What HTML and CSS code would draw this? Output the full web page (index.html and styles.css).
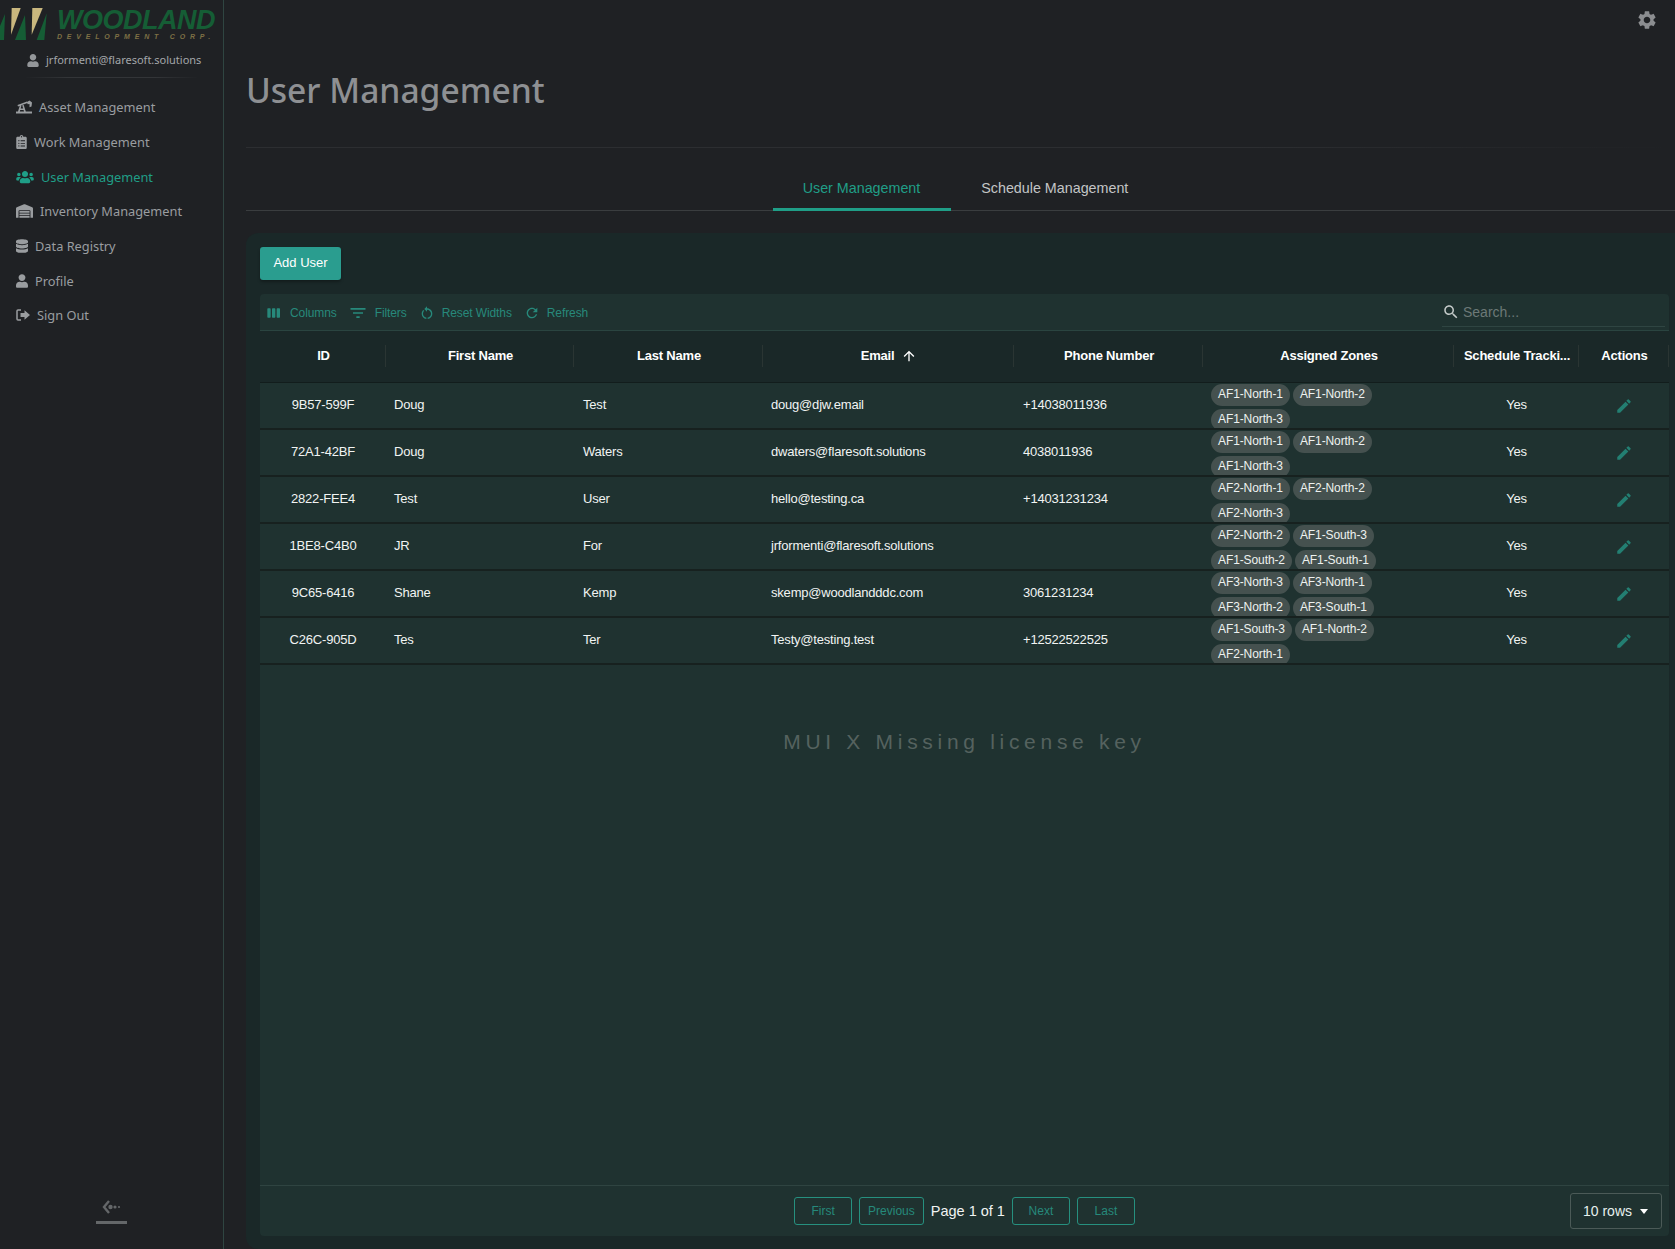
FILE: index.html
```html
<!DOCTYPE html>
<html lang="en">
<head>
<meta charset="utf-8">
<title>User Management</title>
<link rel="stylesheet" href="styles.css">
</head>
<body>
<svg class="sprite" aria-hidden="true">
  <symbol id="i-user" viewBox="0 0 448 512"><path d="M224 256c70.7 0 128-57.3 128-128S294.7 0 224 0 96 57.3 96 128s57.3 128 128 128zm89.6 32h-16.7c-22.2 10.2-46.9 16-72.9 16s-50.6-5.8-72.9-16h-16.7C60.2 288 0 348.2 0 422.4V464c0 26.5 21.5 48 48 48h352c26.5 0 48-21.5 48-48v-41.6c0-74.2-60.2-134.4-134.4-134.4z"/></symbol>
  <symbol id="i-edit" viewBox="0 0 24 24"><path d="M3 17.25V21h3.75L17.81 9.94l-3.75-3.75L3 17.25zM20.71 7.04c.39-.39.39-1.02 0-1.41l-2.34-2.34a.9959.9959 0 0 0-1.41 0l-1.83 1.83 3.75 3.75 1.83-1.83z"/></symbol>
</svg>
<div class="app">
  <aside class="sidebar">
    <div class="brand">
      <svg class="emblem" viewBox="0 0 48 36">
        <polygon class="green" points="5,7 0,19 0,33 4,33"/>
        <polygon class="gold" points="11.700,1 20.700,1 11,27.700"/>
        <polygon class="green" points="25,8 15,33 26,33"/>
        <polygon class="gold" points="32.300,1 42.700,1 31.700,27.700"/>
        <polygon class="green" points="46.700,6.300 36.700,33 44.300,33"/>
      </svg>
      <div class="wordmark">
        <div class="wm-top">WOODLAND</div>
        <div class="wm-sub">DEVELOPMENT CORP.</div>
      </div>
    </div>
    <div class="account">
      <svg class="account-icon"><use href="#i-user"/></svg>
      <span>jrformenti@flaresoft.solutions</span>
    </div>
    <div class="side-rule"></div>
    <nav class="nav">
      <a class="nav-item">
        <svg class="ni ni-asset" viewBox="0 0 16 13"><path d="M0 11h16v2H0zM2 11l2-6.500 1.500.4L3.800 11zM8 11 6.200 4.800l1.500-.4L9.800 11zM3.500 8h4.500v1.500H3.500zM1.500 4.500l9.500-3.500.5 1.500-9.500 3.500zM11 1.500 13.500 0l2.500 2-.5 4-2 .8V3.400l-1.800.4z"/></svg>
        <span>Asset Management</span>
      </a>
      <a class="nav-item">
        <svg class="ni ni-work" viewBox="0 0 384 512"><path d="M336 64h-80c0-35.3-28.7-64-64-64s-64 28.7-64 64H48C21.5 64 0 85.5 0 112v352c0 26.5 21.5 48 48 48h288c26.5 0 48-21.5 48-48V112c0-26.5-21.5-48-48-48zM96 424c-13.3 0-24-10.7-24-24s10.7-24 24-24 24 10.7 24 24-10.7 24-24 24zm0-96c-13.3 0-24-10.7-24-24s10.7-24 24-24 24 10.7 24 24-10.7 24-24 24zm0-96c-13.3 0-24-10.7-24-24s10.7-24 24-24 24 10.7 24 24-10.7 24-24 24zm96-192c13.3 0 24 10.7 24 24s-10.7 24-24 24-24-10.7-24-24 10.7-24 24-24zm128 368c0 4.4-3.6 8-8 8H168c-4.4 0-8-3.6-8-8v-16c0-4.4 3.6-8 8-8h144c4.4 0 8 3.6 8 8v16zm0-96c0 4.4-3.6 8-8 8H168c-4.4 0-8-3.6-8-8v-16c0-4.4 3.6-8 8-8h144c4.4 0 8 3.6 8 8v16zm0-96c0 4.4-3.6 8-8 8H168c-4.4 0-8-3.6-8-8v-16c0-4.4 3.6-8 8-8h144c4.4 0 8 3.6 8 8v16z"/></svg>
        <span>Work Management</span>
      </a>
      <a class="nav-item active">
        <svg class="ni ni-users" viewBox="0 0 640 512"><path d="M96 224c35.3 0 64-28.7 64-64s-28.7-64-64-64-64 28.7-64 64 28.7 64 64 64zm448 0c35.3 0 64-28.7 64-64s-28.7-64-64-64-64 28.7-64 64 28.7 64 64 64zm32 32h-64c-17.6 0-33.5 7.1-45.1 18.6 40.3 22.1 68.9 62 75.1 109.4h66c17.7 0 32-14.3 32-32v-32c0-35.3-28.7-64-64-64zm-256 0c61.9 0 112-50.1 112-112S381.9 32 320 32 208 82.1 208 144s50.1 112 112 112zm76.8 32h-8.3c-20.8 10-43.9 16-68.5 16s-47.6-6-68.5-16h-8.3C179.6 288 128 339.6 128 403.2V432c0 26.5 21.5 48 48 48h288c26.5 0 48-21.5 48-48v-28.8c0-63.6-51.6-115.2-115.2-115.2zm-223.7-13.4C161.5 263.1 145.6 256 128 256H64c-35.3 0-64 28.7-64 64v32c0 17.7 14.3 32 32 32h65.9c6.3-47.4 34.9-87.3 75.2-109.4z"/></svg>
        <span>User Management</span>
      </a>
      <a class="nav-item">
        <svg class="ni ni-inv" viewBox="0 0 640 512"><path d="M504 352H136.4c-4.4 0-8 3.6-8 8l-.1 48c0 4.4 3.6 8 8 8H504c4.4 0 8-3.6 8-8v-48c0-4.4-3.6-8-8-8zm0 96H136.1c-4.4 0-8 3.6-8 8l-.1 48c0 4.4 3.6 8 8 8h368c4.4 0 8-3.6 8-8v-48c0-4.4-3.6-8-8-8zm0-192H136.6c-4.4 0-8 3.6-8 8l-.1 48c0 4.4 3.6 8 8 8H504c4.4 0 8-3.6 8-8v-48c0-4.4-3.6-8-8-8zm106.5-139L338.4 3.7a48.15 48.15 0 0 0-36.9 0L29.5 117C11.7 124.5 0 141.9 0 161.3V504c0 4.4 3.6 8 8 8h80c4.4 0 8-3.6 8-8V256c0-17.6 14.6-32 32.6-32h382.8c18 0 32.6 14.4 32.6 32v248c0 4.4 3.6 8 8 8h80c4.4 0 8-3.6 8-8V161.3c0-19.4-11.7-36.8-29.5-44.3z"/></svg>
        <span>Inventory Management</span>
      </a>
      <a class="nav-item">
        <svg class="ni ni-data" viewBox="0 0 448 512"><path d="M448 73.143v45.714C448 159.143 347.667 192 224 192S0 159.143 0 118.857V73.143C0 32.857 100.333 0 224 0s224 32.857 224 73.143zM448 176v102.857C448 319.143 347.667 352 224 352S0 319.143 0 278.857V176c48.125 33.143 136.208 48.572 224 48.572S399.874 209.143 448 176zm0 160v102.857C448 479.143 347.667 512 224 512S0 479.143 0 438.857V336c48.125 33.143 136.208 48.572 224 48.572S399.874 369.143 448 336z"/></svg>
        <span>Data Registry</span>
      </a>
      <a class="nav-item">
        <svg class="ni ni-data"><use href="#i-user"/></svg>
        <span>Profile</span>
      </a>
      <a class="nav-item">
        <svg class="ni ni-sign" viewBox="0 0 14 12"><path d="M5 1H2a1 1 0 0 0-1 1v8a1 1 0 0 0 1 1h3" fill="none" stroke="currentColor" stroke-width="1.5"/><path d="M8.500 1.200 14 6l-5.500 4.800V8H4.500V4h4z"/></svg>
        <span>Sign Out</span>
      </a>
    </nav>
    <div class="collapse">
      <svg class="collapse-arrow" viewBox="0 0 20 14"><path d="M7 1 2 7l5 6" fill="none" stroke="currentColor" stroke-width="2.400"/><circle cx="8.500" cy="7" r="2.200"/><circle cx="13" cy="7" r="1.600"/><circle cx="17" cy="7" r="1.100"/></svg>
      <div class="collapse-bar"></div>
    </div>
  </aside>
  <main class="main">
    <div class="topbar">
      <svg class="gear" viewBox="0 0 24 24"><path d="M19.140 12.940c.04-.3.06-.61.06-.94 0-.32-.02-.64-.07-.94l2.030-1.580c.18-.14.23-.41.12-.61l-1.920-3.320c-.12-.22-.37-.29-.59-.22l-2.390.96c-.5-.38-1.030-.7-1.620-.94l-.36-2.540c-.04-.24-.24-.41-.48-.41h-3.840c-.24 0-.43.17-.47.41l-.36 2.540c-.59.24-1.130.57-1.620.94l-2.390-.96c-.22-.08-.47 0-.59.22L2.740 8.870c-.12.21-.08.47.12.61l2.030 1.580c-.05.3-.09.63-.09.94s.02.64.07.94l-2.030 1.580c-.18.14-.23.41-.12.61l1.920 3.320c.12.22.37.29.59.22l2.390-.96c.5.38 1.030.7 1.620.94l.36 2.540c.05.24.24.41.48.41h3.840c.24 0 .44-.17.47-.41l.36-2.540c.59-.24 1.130-.56 1.620-.94l2.390.96c.22.08.47 0 .59-.22l1.920-3.320c.12-.22.07-.47-.12-.61l-2.010-1.580zM12 15.600c-1.980 0-3.600-1.620-3.600-3.600s1.620-3.600 3.600-3.600 3.600 1.620 3.600 3.600-1.620 3.600-3.600 3.600z"/></svg>
    </div>
    <h1 class="title">User Management</h1>
    <div class="title-rule"></div>
    <div class="tabs">
      <div class="tab tab-active">User Management</div>
      <div class="tab">Schedule Management</div>
    </div>
    <section class="panel">
      <button class="add-btn">Add User</button>
      <div class="grid">
        <div class="toolbar">
          <div class="tool tool-columns">
            <svg class="tool-icon" viewBox="0 0 24 24"><path d="M6 5H3c-.55 0-1 .45-1 1v12c0 .55.45 1 1 1h3c.55 0 1-.45 1-1V6c0-.55-.45-1-1-1zm14 0h-3c-.55 0-1 .45-1 1v12c0 .55.45 1 1 1h3c.55 0 1-.45 1-1V6c0-.55-.45-1-1-1zm-7 0h-3c-.55 0-1 .45-1 1v12c0 .55.45 1 1 1h3c.55 0 1-.45 1-1V6c0-.55-.45-1-1-1z"/></svg>
            <span>Columns</span>
          </div>
          <div class="tool">
            <svg class="tool-icon tool-icon-lg" viewBox="0 0 24 24"><path d="M10 18h4v-2h-4v2zM3 6v2h18V6H3zm3 7h12v-2H6v2z"/></svg>
            <span>Filters</span>
          </div>
          <div class="tool">
            <svg class="tool-icon" viewBox="0 0 24 24"><path d="M12 5V2L8 6l4 4V7c3.310 0 6 2.690 6 6 0 2.970-2.170 5.430-5 5.910v2.020c3.950-.49 7-3.850 7-7.930 0-4.420-3.580-8-8-8zm-6 8c0-1.650.67-3.150 1.760-4.240L6.340 7.340C4.900 8.790 4 10.790 4 13c0 4.080 3.050 7.440 7 7.930v-2.020c-2.830-.48-5-2.940-5-5.910z"/></svg>
            <span>Reset Widths</span>
          </div>
          <div class="tool">
            <svg class="tool-icon" viewBox="0 0 24 24"><path d="M17.650 6.350C16.200 4.900 14.210 4 12 4c-4.420 0-7.990 3.580-7.990 8s3.570 8 7.990 8c3.730 0 6.840-2.550 7.730-6h-2.080c-.82 2.330-3.040 4-5.650 4-3.310 0-6-2.690-6-6s2.690-6 6-6c1.660 0 3.140.69 4.220 1.780L13 11h7V4l-2.350 2.350z"/></svg>
            <span>Refresh</span>
          </div>
          <div class="search">
            <svg class="search-icon" viewBox="0 0 24 24"><path d="M15.500 14h-.79l-.28-.27C15.410 12.590 16 11.110 16 9.500 16 5.910 13.090 3 9.500 3S3 5.910 3 9.500 5.910 16 9.500 16c1.610 0 3.090-.59 4.230-1.570l.27.28v.79l5 4.990L20.490 19l-4.990-5zm-6 0C7.010 14 5 11.990 5 9.500S7.010 5 9.500 5 14 7.010 14 9.500 11.990 14 9.500 14z"/></svg>
            <span>Search...</span>
          </div>
        </div>
        <div class="cols head">
          <div class="hc">ID</div>
          <div class="hc">First Name</div>
          <div class="hc">Last Name</div>
          <div class="hc">Email
            <svg class="sort" viewBox="0 0 24 24"><path d="M4 12l1.410 1.410L11 7.830V20h2V7.830l5.580 5.590L20 12l-8-8-8 8z"/></svg>
          </div>
          <div class="hc">Phone Number</div>
          <div class="hc">Assigned Zones</div>
          <div class="hc">Schedule Tracki...</div>
          <div class="hc">Actions</div>
        </div>
        <div class="body">
          <div class="cols row">
            <div class="c c-center">9B57-599F</div><div class="c">Doug</div><div class="c">Test</div><div class="c">doug@djw.email</div><div class="c">+14038011936</div>
            <div class="chips"><span class="chip">AF1-North-1</span><span class="chip">AF1-North-2</span><span class="chip">AF1-North-3</span></div>
            <div class="c c-center">Yes</div><div class="c c-center"><svg class="edit"><use href="#i-edit"/></svg></div>
          </div>
          <div class="cols row">
            <div class="c c-center">72A1-42BF</div><div class="c">Doug</div><div class="c">Waters</div><div class="c">dwaters@flaresoft.solutions</div><div class="c">4038011936</div>
            <div class="chips"><span class="chip">AF1-North-1</span><span class="chip">AF1-North-2</span><span class="chip">AF1-North-3</span></div>
            <div class="c c-center">Yes</div><div class="c c-center"><svg class="edit"><use href="#i-edit"/></svg></div>
          </div>
          <div class="cols row">
            <div class="c c-center">2822-FEE4</div><div class="c">Test</div><div class="c">User</div><div class="c">hello@testing.ca</div><div class="c">+14031231234</div>
            <div class="chips"><span class="chip">AF2-North-1</span><span class="chip">AF2-North-2</span><span class="chip">AF2-North-3</span></div>
            <div class="c c-center">Yes</div><div class="c c-center"><svg class="edit"><use href="#i-edit"/></svg></div>
          </div>
          <div class="cols row">
            <div class="c c-center">1BE8-C4B0</div><div class="c">JR</div><div class="c">For</div><div class="c">jrformenti@flaresoft.solutions</div><div class="c"></div>
            <div class="chips"><span class="chip">AF2-North-2</span><span class="chip">AF1-South-3</span><span class="chip">AF1-South-2</span><span class="chip">AF1-South-1</span></div>
            <div class="c c-center">Yes</div><div class="c c-center"><svg class="edit"><use href="#i-edit"/></svg></div>
          </div>
          <div class="cols row">
            <div class="c c-center">9C65-6416</div><div class="c">Shane</div><div class="c">Kemp</div><div class="c">skemp@woodlandddc.com</div><div class="c">3061231234</div>
            <div class="chips"><span class="chip">AF3-North-3</span><span class="chip">AF3-North-1</span><span class="chip">AF3-North-2</span><span class="chip">AF3-South-1</span></div>
            <div class="c c-center">Yes</div><div class="c c-center"><svg class="edit"><use href="#i-edit"/></svg></div>
          </div>
          <div class="cols row">
            <div class="c c-center">C26C-905D</div><div class="c">Tes</div><div class="c">Ter</div><div class="c">Testy@testing.test</div><div class="c">+12522522525</div>
            <div class="chips"><span class="chip">AF1-South-3</span><span class="chip">AF1-North-2</span><span class="chip">AF2-North-1</span></div>
            <div class="c c-center">Yes</div><div class="c c-center"><svg class="edit"><use href="#i-edit"/></svg></div>
          </div>
          <div class="watermark">MUI X Missing license key</div>
        </div>
        <div class="footer">
          <div class="pager">
            <button class="pg">First</button>
            <button class="pg">Previous</button>
            <span class="pg-label">Page 1 of 1</span>
            <button class="pg">Next</button>
            <button class="pg">Last</button>
          </div>
          <div class="rows-select"><span>10 rows</span><i class="caret"></i></div>
        </div>
      </div>
    </section>
  </main>
</div>
</body>
</html>
```

FILE: styles.css
```css
* { box-sizing: border-box; }
html, body { margin: 0; height: 100%; overflow: hidden; }
body {
  background: #1f2124;
  color: #fff;
  font-family: "Liberation Sans", Arial, sans-serif;
}
.sprite { display: none; }
.app { display: flex; height: 1249px; }

/* Sidebar */
.sidebar {
  width: 224px;
  flex: none;
  display: flex;
  flex-direction: column;
  border-right: 1px solid #2f4541;
  font-family: "Noto Sans", sans-serif;
  color: #9a9da0;
}
.brand { display: flex; height: 43px; padding-top: 7px; gap: 9px; }
.emblem { width: 48px; height: 36px; flex: none; }
.gold { fill: #c9b77e; }
.green { fill: #155d35; }
.wordmark { min-width: 0; padding-top: 1px; }
.wm-top {
  font-family: "Liberation Sans", sans-serif;
  font-weight: 700;
  font-style: italic;
  font-size: 27px;
  line-height: 25px;
  letter-spacing: -.5px;
  color: #155d35;
  white-space: nowrap;
}
.wm-sub {
  font-family: "Liberation Sans", sans-serif;
  font-weight: 700;
  font-style: italic;
  font-size: 7px;
  line-height: 8px;
  letter-spacing: 4.800px;
  color: #7d7044;
  white-space: nowrap;
}
.account {
  display: flex;
  align-items: center;
  gap: 7px;
  margin-top: 9px;
  padding-left: 27px;
  font-size: 11px;
  line-height: 16px;
  color: #a3a6a9;
  white-space: nowrap;
}
.account-icon { width: 12px; height: 13px; fill: #94979a; flex: none; }
.side-rule {
  height: 1px;
  margin: 9px 24px 0;
  background: linear-gradient(90deg, transparent, #333538 25%, #333538 75%, transparent);
}
.nav { display: flex; flex-direction: column; padding: 12px 0 0 16px; }
.nav-item {
  height: 34.700px;
  display: flex;
  align-items: center;
  gap: 7px;
  font-size: 12.800px;
  white-space: nowrap;
  color: #9a9da0;
}
.nav-item.active { color: #1f9e87; }
.ni { fill: currentColor; flex: none; height: 14px; }
.ni-asset { width: 16px; }
.ni-work { width: 11px; }
.ni-users { width: 18px; }
.ni-inv { width: 17px; }
.ni-data { width: 12px; }
.ni-sign { width: 14px; }
.collapse {
  margin-top: auto;
  padding-bottom: 25px;
  display: flex;
  flex-direction: column;
  align-items: center;
  gap: 7px;
  color: #646769;
}
.collapse-arrow { width: 20px; height: 14px; fill: currentColor; }
.collapse-bar { width: 31px; height: 3px; background: #646769; }

/* Main */
.main { flex: 1; min-width: 0; display: flex; flex-direction: column; padding-left: 22px; }
.topbar { height: 62px; display: flex; justify-content: flex-end; padding: 9px 17px 0 0; flex: none; }
.gear { width: 22px; height: 22px; fill: #8b8d90; }
.title {
  margin: 0;
  height: 56px;
  font-family: "Noto Sans", sans-serif;
  font-size: 33.600px;
  line-height: 56px;
  font-weight: 500;
  color: #8e9093;
}
.title-rule {
  height: 1px;
  margin-top: 29px;
  background: linear-gradient(90deg, #2c2e31, #2c2e31 70%, transparent);
}
.tabs {
  height: 63px;
  display: flex;
  justify-content: center;
  padding-left: 11px;
  border-bottom: 1px solid #3a3d3f;
  flex: none;
}
.tab {
  padding: 18px 31px 0 30px;
  display: flex;
  align-items: center;
  font-size: 14.300px;
  color: #c3c5c6;
  white-space: nowrap;
}
.tab-active { color: #1f9e87; border-bottom: 3px solid #1f9e87; margin-bottom: -1px; padding-top: 20px; }

.panel {
  margin-top: 22px;
  flex: 1;
  min-height: 0;
  background: #1a2828;
  border-radius: 12px 0 0 12px;
  padding: 14px 6px 13px 14px;
  display: flex;
  flex-direction: column;
  align-items: flex-start;
}
.add-btn {
  width: 81px;
  height: 33px;
  border: 0;
  border-radius: 3px;
  background: #2a9d8f;
  color: #fff;
  font: 13px "Liberation Sans", sans-serif;
  padding: 0 0 3px;
  box-shadow: 0 2px 3px rgba(0,0,0,.3);
  flex: none;
}
.grid {
  margin-top: 14px;
  width: 100%;
  flex: 1;
  min-height: 0;
  display: flex;
  flex-direction: column;
  background: #1f3230;
  border-radius: 4px;
}
.toolbar {
  height: 37px;
  flex: none;
  display: flex;
  align-items: center;
  padding: 0 4px 0 6px;
  gap: 12px;
  border-bottom: 1px solid #2a4440;
  color: #27897b;
  font-size: 12px;
  letter-spacing: -.1px;
}
.tool { display: flex; align-items: center; gap: 7px; white-space: nowrap; padding-top: 2px; }
.tool-columns span { margin-left: 1px; }
.tool-icon { width: 16px; height: 16px; fill: currentColor; flex: none; }
.tool-icon-lg { width: 20px; height: 20px; margin-left: -1px; }
.search {
  margin-left: auto;
  align-self: flex-start;
  margin-top: 4px;
  width: 223px;
  height: 29px;
  display: flex;
  align-items: center;
  gap: 3px;
  border-bottom: 1px solid #2f4542;
  color: #6c7977;
  font-size: 14px;
  letter-spacing: 0;
}
.search-icon { width: 18px; height: 18px; fill: #c4cac9; flex: none; }

.cols {
  display: grid;
  grid-template-columns: 126px 188px 189px 251px 189px 251px 125px 90px;
}
.head {
  height: 52px;
  padding-bottom: 2px;
  flex: none;
  align-items: center;
  background: #1a2828;
  border-bottom: 1px solid #121d1c;
}
.hc {
  height: 22px;
  display: flex;
  align-items: center;
  justify-content: center;
  gap: 7px;
  padding-left: 2px;
  font-size: 13px;
  letter-spacing: -.2px;
  font-weight: 700;
  color: #fff;
  border-right: 1px solid #2a3533;
  white-space: nowrap;
}
.sort { width: 16px; height: 16px; fill: #fff; }
.body { position: relative; flex: 1; min-height: 0; }
.row {
  height: 47px;
  border-bottom: 2px solid #17211f;
  font-size: 13px;
  letter-spacing: -.2px;
  color: #f1f4f3;
  overflow: hidden;
}
.c {
  display: flex;
  align-items: center;
  padding: 0 8px 3px;
  white-space: nowrap;
}
.c:nth-child(3), .c:nth-child(5) { padding-left: 9px; }
.c-center { justify-content: center; }
.c:last-child { padding: 0; }
.chips {
  display: flex;
  flex-wrap: wrap;
  align-content: flex-start;
  column-gap: 3px;
  row-gap: 3px;
  padding: 1px 8px 0 8px;
  overflow: hidden;
}
.chip {
  height: 22px;
  padding: 0 7px;
  border-radius: 11px;
  background: #45514f;
  color: #eef1f0;
  font-size: 12px;
  line-height: 21px;
  letter-spacing: -.1px;
  white-space: nowrap;
}
.edit { width: 18px; height: 18px; fill: #237f72; }
.watermark {
  position: absolute;
  left: 0;
  right: 0;
  top: 346px;
  text-align: center;
  font-size: 21px;
  letter-spacing: 4.700px;
  line-height: 26px;
  color: #55625f;
}
.footer {
  height: 51px;
  flex: none;
  border-top: 1px solid #2f4441;
  display: grid;
  grid-template-columns: 1fr auto 1fr;
  align-items: center;
}
.pager { grid-column: 2; display: flex; align-items: center; gap: 7px; }
.pg {
  height: 28px;
  padding: 0 8px;
  min-width: 58px;
  background: transparent;
  border: 1px solid #26907f;
  border-radius: 3px;
  color: #26897b;
  font: 12px "Liberation Sans", sans-serif;
}
.pg-label { font-size: 14.500px; color: #f1f4f3; white-space: nowrap; }
.rows-select {
  grid-column: 3;
  justify-self: end;
  margin-right: 7px;
  width: 92px;
  height: 36px;
  display: flex;
  align-items: center;
  gap: 8px;
  padding-left: 12px;
  border: 1px solid #4b5a57;
  border-radius: 3px;
  font-size: 14px;
  color: #e6f0ee;
}
.caret {
  width: 0;
  height: 0;
  border-left: 4.500px solid transparent;
  border-right: 4.500px solid transparent;
  border-top: 5px solid #fff;
}
```
